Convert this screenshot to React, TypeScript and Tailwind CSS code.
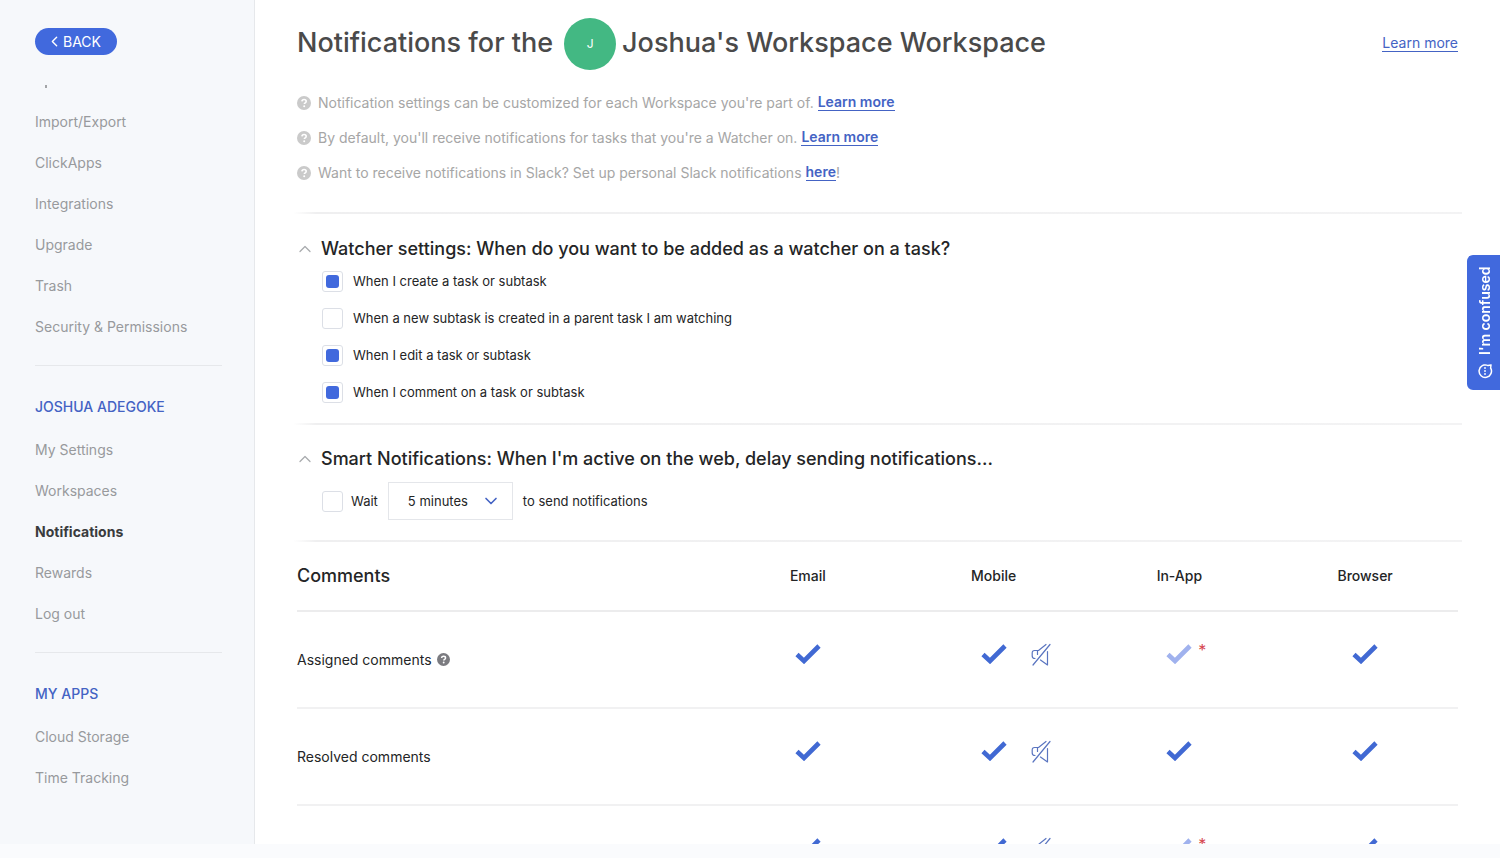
import { useState } from "react";
import { ChevronDown, ChevronLeft, ChevronUp } from "lucide-react";

const workspaceLinks = ["Import/Export", "ClickApps", "Integrations", "Upgrade", "Trash", "Security & Permissions"];
const userLinks = ["My Settings", "Workspaces", "Notifications", "Rewards", "Log out"];
const appLinks = ["Cloud Storage", "Time Tracking"];

const hints = [
  { text: "Notification settings can be customized for each Workspace you're part of.", link: "Learn more", end: "" },
  { text: "By default, you'll receive notifications for tasks that you're a Watcher on.", link: "Learn more", end: "" },
  { text: "Want to receive notifications in Slack? Set up personal Slack notifications", link: "here", end: "!" },
];

const watcherOptions = [
  { id: "create", label: "When I create a task or subtask", checked: true },
  { id: "parent", label: "When a new subtask is created in a parent task I am watching", checked: false },
  { id: "edit", label: "When I edit a task or subtask", checked: true },
  { id: "comment", label: "When I comment on a task or subtask", checked: true },
];

const channels = ["Email", "Mobile", "In-App", "Browser"];

const commentRows = [
  { label: "Assigned comments", help: true, locked: true },
  { label: "Resolved comments", help: false, locked: false },
  { label: "", help: false, locked: true },
];

function HelpIcon({ className }: { className: string }) {
  return (
    <svg viewBox="0 0 14 14" className={className} aria-hidden="true">
      <circle cx="7" cy="7" r="7" fill="currentColor" />
      <path
        d="M4.9 5.4c.1-1.2 1-1.9 2.2-1.9 1.2 0 2.1.7 2.1 1.8 0 1.5-1.9 1.5-1.9 2.8"
        fill="none"
        stroke="white"
        strokeWidth="1.6"
      />
      <circle cx="7.2" cy="10.2" r="1" fill="white" />
    </svg>
  );
}

// megaphone with a slash through it
function MuteIcon() {
  return (
    <svg
      viewBox="0 0 20 24"
      className="h-6 w-5 text-[#5a75c0]"
      fill="none"
      stroke="currentColor"
      strokeWidth="1.2"
      strokeLinecap="round"
      strokeLinejoin="round"
    >
      <path d="M2 22 19 1.5" />
      <path d="M15 1.5 7.5 7.5h-4Q1.2 7.5 1.2 10v3q0 2.5 2.8 2.5" />
      <path d="M6.5 8v3.5" />
      <path d="M16.5 8.5V22l-7-5" />
    </svg>
  );
}

function NavList({ items }: { items: string[] }) {
  return (
    <ul>
      {items.map((item) => (
        <li key={item} className="flex h-[41px] items-center">
          <a href="#" className={item === "Notifications" ? "font-bold text-[#3a3b3d]" : "text-[#989a9d]"}>
            {item}
          </a>
        </li>
      ))}
    </ul>
  );
}

function Divider() {
  return <div className="-mx-1 h-0.5 shrink-0 bg-linear-to-r from-transparent via-[#efeff0] via-2% to-[#f3f3f4]" />;
}

function SectionTitle({ children }: { children: React.ReactNode }) {
  return (
    <h2 className="flex h-7 items-center gap-2 text-lg font-medium text-[#242526]">
      <button type="button" aria-label="Collapse section" className="flex w-4 justify-center text-[#a9abae]">
        <ChevronUp size={20} strokeWidth={1.5} className="shrink-0" />
      </button>
      {children}
    </h2>
  );
}

const boxClass =
  "grid size-[21px] shrink-0 appearance-none place-content-center rounded-[3px] border border-[#dcdfe6] bg-white checked:before:size-[13px] checked:before:rounded-[3px] checked:before:bg-[#4169dd] checked:before:content-['']";

function ChannelToggle({ label, locked }: { label: string; locked: boolean }) {
  const [on, setOn] = useState(true);
  return (
    <label className="relative inline-block cursor-pointer align-middle">
      <input
        type="checkbox"
        aria-label={label}
        checked={on}
        disabled={locked}
        onChange={() => setOn(!on)}
        className="sr-only"
      />
      <svg viewBox="0 0 26 20" className={`h-5 w-[26px] ${locked ? "text-[#a0b2ee]" : "text-[#4169d3]"}`}>
        {on && <path d="M2 10.5 9 17 24 2" fill="none" stroke="currentColor" strokeWidth="4.6" />}
      </svg>
      {locked && <span className="absolute -top-1.5 -right-3.5 text-base leading-6 text-[#d6484f]">*</span>}
    </label>
  );
}

function Sidebar() {
  return (
    <aside className="w-[255px] shrink-0 border-r border-[#e6e8eb] bg-[#f6f8fb] pt-7 pr-8 pl-[35px] text-sm">
      <button type="button" className="flex h-[27px] items-center rounded-full bg-[#4169dd] pr-4 pl-[11px] text-white">
        <ChevronLeft size={17} />
        BACK
      </button>
      <div className="flex h-[46px] items-center pt-4 pl-2.5">
        <span className="h-[3px] w-0.5 bg-[#a3a5a8]" />
      </div>
      <NavList items={workspaceLinks} />
      <hr className="mt-[18px] border-[#e6e8eb]" />
      <h3 className="mt-[31px] leading-5 font-medium text-[#4463c4]">JOSHUA ADEGOKE</h3>
      <div className="mt-3">
        <NavList items={userLinks} />
      </div>
      <hr className="mt-[18px] border-[#e6e8eb]" />
      <h3 className="mt-[31px] leading-5 font-medium text-[#4463c4]">MY APPS</h3>
      <div className="mt-3">
        <NavList items={appLinks} />
      </div>
    </aside>
  );
}

export default function App() {
  const [watching, setWatching] = useState(watcherOptions.map((o) => o.checked));
  const [wait, setWait] = useState(false);

  return (
    <div className="flex h-screen flex-col overflow-hidden bg-white font-['Inter','Liberation_Sans',sans-serif] text-sm text-[#242526]">
      <div className="flex min-h-0 flex-1 overflow-hidden">
        <Sidebar />

        <main className="min-w-0 flex-1 px-[42px] pt-[17px]">
          <header className="flex h-[53px] items-center justify-between">
            <h1 className="flex items-center text-[27px] font-medium text-[#4a4a4a]">
              Notifications for the
              <span className="mr-1.5 ml-[11px] flex size-[52px] items-center justify-center rounded-full bg-[#43b883] text-xs font-normal text-white">
                J
              </span>
              Joshua's Workspace Workspace
            </h1>
            <a href="#" className="border-b border-[#4463c4] leading-4 text-[#4463c4]">
              Learn more
            </a>
          </header>

          <div className="mt-[15px] mb-[22px]">
            {hints.map((hint) => (
              <p key={hint.text} className="flex h-[35px] items-center text-[#a6a6a6]">
                <HelpIcon className="mr-[7px] size-3.5 shrink-0 text-[#cacaca]" />
                {hint.text}
                <a href="#" className="ml-1 border-b border-[#4463c4] leading-4 font-semibold text-[#4463c4]">
                  {hint.link}
                </a>
                {hint.end}
              </p>
            ))}
          </div>
          <Divider />

          <section className="pt-[21px] pb-3">
            <SectionTitle>Watcher settings: When do you want to be added as a watcher on a task?</SectionTitle>
            <div className="pl-[25px]">
              {watcherOptions.map((option, i) => (
                <label key={option.id} className="flex h-[37px] items-center gap-2.5 text-[13px]">
                  <input
                    type="checkbox"
                    checked={watching[i]}
                    onChange={() => setWatching(watching.map((w, n) => (n === i ? !w : w)))}
                    className={boxClass}
                  />
                  {option.label}
                </label>
              ))}
            </div>
          </section>
          <Divider />

          <section className="pt-5 pb-5">
            <SectionTitle>Smart Notifications: When I'm active on the web, delay sending notifications...</SectionTitle>
            <div className="mt-[9px] flex items-center pl-[25px] text-[13px]">
              <label className="flex items-center gap-2">
                <input type="checkbox" checked={wait} onChange={() => setWait(!wait)} className={boxClass} />
                Wait
              </label>
              <div className="relative mx-2.5">
                <select
                  aria-label="Delay"
                  defaultValue="5 minutes"
                  className="h-[38px] w-[125px] appearance-none border border-[#e4e6ea] bg-white pr-9 pl-[19px]"
                >
                  <option>5 minutes</option>
                  <option>10 minutes</option>
                </select>
                <ChevronDown size={20} className="pointer-events-none absolute top-[9px] right-3 text-[#4463c4]" />
              </div>
              to send notifications
            </div>
          </section>
          <Divider />

          <table className="w-full table-fixed border-collapse">
            <thead>
              <tr className="h-[69px] border-b-2 border-[#ececed]">
                <th scope="col" className="text-left text-lg font-medium">
                  Comments
                </th>
                {channels.map((channel) => (
                  <th key={channel} scope="col" className="w-[16%] font-medium">
                    {channel}
                  </th>
                ))}
              </tr>
            </thead>
            <tbody>
              {commentRows.map((row, i) => (
                <tr key={i} className="h-[97px] border-b-2 border-[#f1f1f2]">
                  <th scope="row" className="text-left font-normal">
                    <span className="flex items-center gap-[5px]">
                      {row.label}
                      {row.help && <HelpIcon className="size-[13px] text-[#7b7b80]" />}
                    </span>
                  </th>
                  {channels.map((channel) => (
                    <td key={channel} className="pb-3 text-center">
                      <span className="relative inline-block">
                        <ChannelToggle label={`${row.label} ${channel}`} locked={row.locked && channel === "In-App"} />
                        {channel === "Mobile" && (
                          <button type="button" aria-label="Mute" className="absolute top-0 left-[50px]">
                            <MuteIcon />
                          </button>
                        )}
                      </span>
                    </td>
                  ))}
                </tr>
              ))}
            </tbody>
          </table>
        </main>
      </div>
      <div className="h-3.5 shrink-0 bg-[#fafbfd]" />

      <button
        type="button"
        className="fixed top-[255px] right-0 flex h-[135px] w-[33px] rotate-180 items-center justify-center gap-2 rounded-r-md bg-[#4169dd] pr-1 text-sm font-semibold text-white [writing-mode:vertical-rl]"
      >
        <svg viewBox="0 0 16 16" className="size-4 shrink-0" fill="none" stroke="currentColor" strokeWidth="1.5">
          <path d="M2.4 11A6.2 6.2 0 1 1 5 13.4L2 14Z" strokeLinejoin="round" />
          <path d="M8 4.2v1.6M8 7.2v1.6M8 10.2v1.6" strokeWidth="1.8" />
        </svg>
        I'm confused
      </button>
    </div>
  );
}
